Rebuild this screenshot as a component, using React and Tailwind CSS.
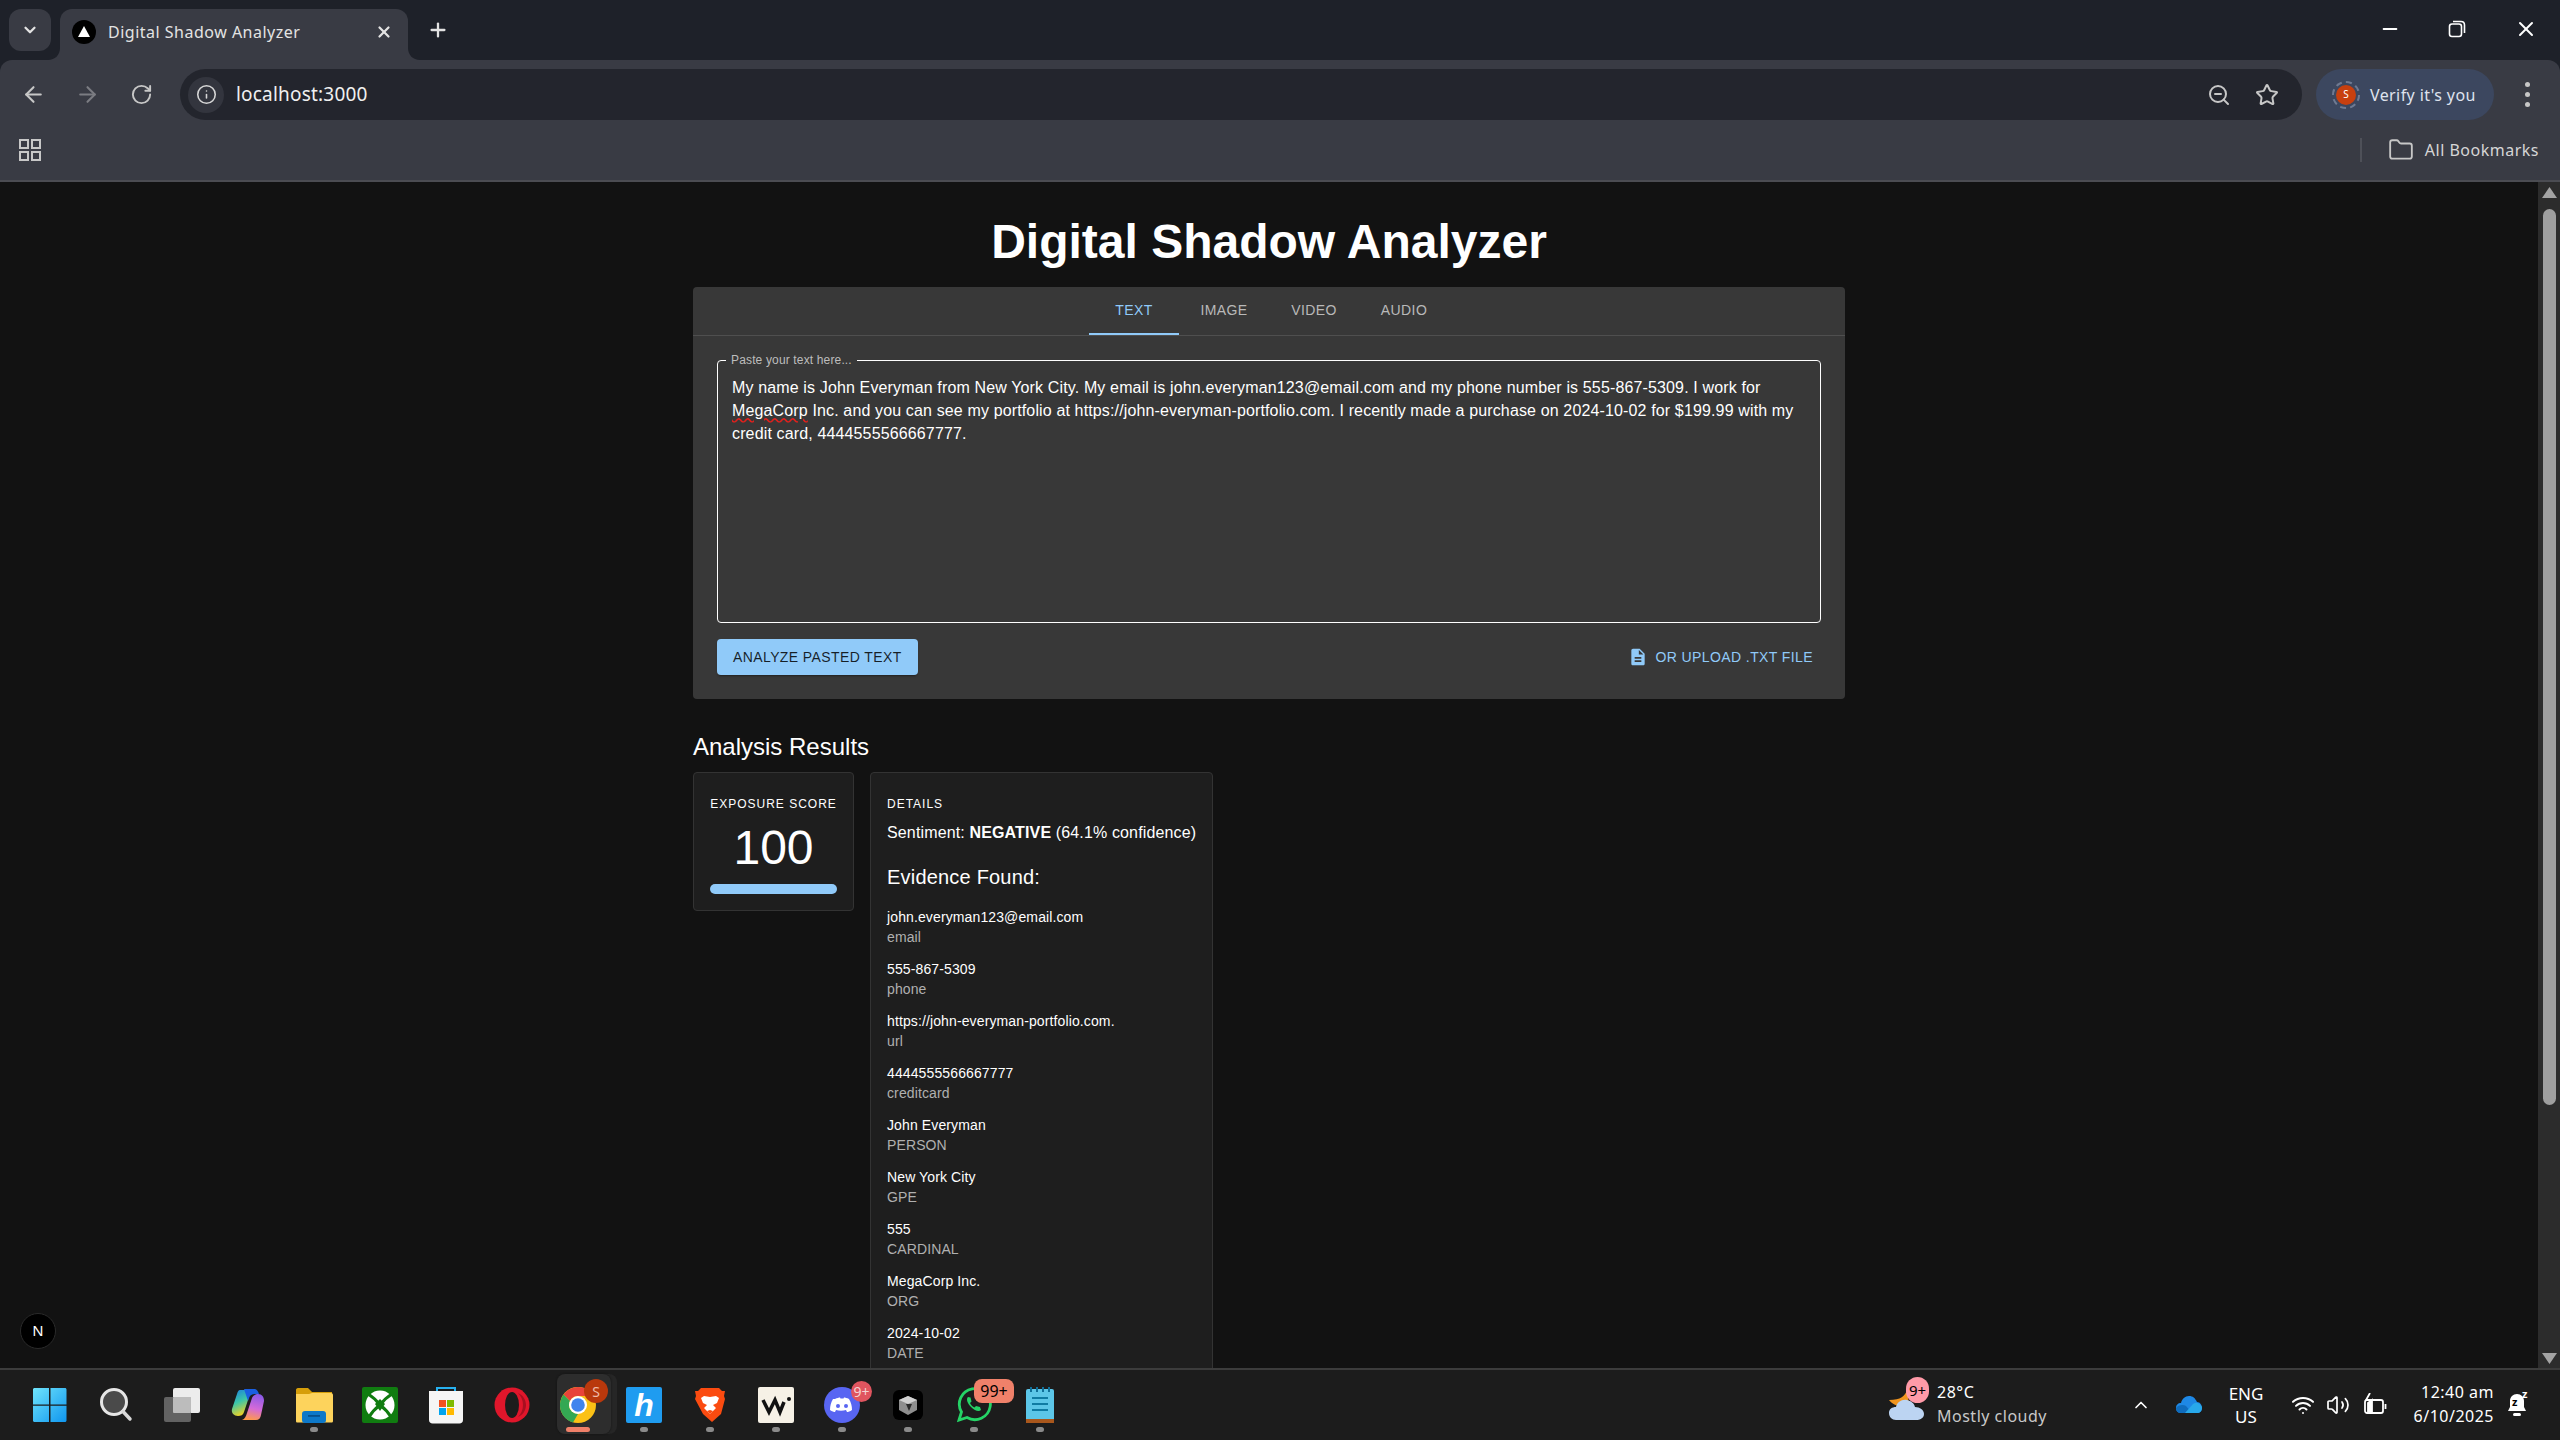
import { ArrowLeft, ArrowRight, RotateCw, Info, ZoomOut, Star, Folder, X, Plus, ChevronDown, ChevronUp, Minus, Volume2, Wifi } from "lucide-react";

const sans = "font-['Liberation_Sans',Arial,sans-serif]";
const ui = "font-['Noto_Sans',sans-serif]";

const evidence = [
  ["john.everyman123@email.com", "email"],
  ["555-867-5309", "phone"],
  ["https://john-everyman-portfolio.com.", "url"],
  ["4444555566667777", "creditcard"],
  ["John Everyman", "PERSON"],
  ["New York City", "GPE"],
  ["555", "CARDINAL"],
  ["MegaCorp Inc.", "ORG"],
  ["2024-10-02", "DATE"],
];

function WindowsIcon() {
  return (
    <svg width="36" height="36" viewBox="0 0 36 36">
      <defs>
        <linearGradient id="win" x1="0" y1="0" x2="1" y2="1">
          <stop offset="0" stopColor="#6fe4fb" />
          <stop offset="1" stopColor="#0f96ef" />
        </linearGradient>
      </defs>
      <path fill="url(#win)" d="M1 2.5C1 1.7 1.7 1 2.5 1H17v16.500H1zM18.500 1H33c.8 0 1.500.7 1.500 1.500V17.500H18.500zM1 18.800H17V35H2.500C1.700 35 1 34.300 1 33.500zM18.500 18.800h16V33.500c0 .8-.7 1.500-1.500 1.500H18.500z" />
    </svg>
  );
}

function SearchIcon() {
  return (
    <svg width="36" height="36" viewBox="0 0 36 36">
      <circle cx="16" cy="15" r="12.500" fill="#4a4a4a" stroke="#e6e6e6" strokeWidth="3" />
      <path d="M25 24.500L32 32" stroke="#d8d8d8" strokeWidth="3.500" strokeLinecap="round" />
    </svg>
  );
}

function TaskViewIcon() {
  return (
    <svg width="38" height="36" viewBox="0 0 38 36">
      <rect x="10" y="1" width="27" height="25" rx="2" fill="#ececec" />
      <rect x="1" y="10" width="27" height="25" rx="2" fill="#6a6a6a" fillOpacity="0.9" />
      <rect x="10" y="10" width="18" height="16" rx="1" fill="#bcbcbc" />
    </svg>
  );
}

function CopilotIcon() {
  return (
    <svg width="36" height="36" viewBox="0 0 36 36">
      <defs>
        <linearGradient id="cp1" x1="0" y1="0" x2="0.4" y2="1">
          <stop offset="0" stopColor="#1a7de0" />
          <stop offset="0.5" stopColor="#3cc6a8" />
          <stop offset="1" stopColor="#f4d21f" />
        </linearGradient>
        <linearGradient id="cp2" x1="0.6" y1="0" x2="0.4" y2="1">
          <stop offset="0" stopColor="#8a5ae8" />
          <stop offset="0.55" stopColor="#d46ad8" />
          <stop offset="1" stopColor="#ff9a4a" />
        </linearGradient>
      </defs>
      <path fill="url(#cp1)" d="M10 3h14c-3 1-4 4-5 7l-5 15c-1 3-3 4-6 4-4 0-7-3-6-7L7 7c.5-2 1.500-4 3-4z" />
      <path fill="url(#cp2)" d="M26 33H12c3-1 4-4 5-7l5-15c1-2 3-4 6-4 4 0 6 3 6 7l-3 14c-.5 3-2 5-5 5z" />
      <path fill="#1a5fe0" d="M14 2h10c3 0 4 2 5 5h-4c-3 0-5 1-6 4l-1 3z" />
    </svg>
  );
}

function ExplorerIcon() {
  return (
    <svg width="38" height="36" viewBox="0 0 38 36">
      <path fill="#d69e0a" d="M1 3c0-1 .7-2 2-2h10l4 4h20v6H1z" />
      <path fill="#fdd35c" d="M1 7h13l3-1h19c1 0 2 .7 2 2v26c0 1-.7 1.500-1.500 1.500H2.500C1.500 35.500 1 35 1 34z" />
      <rect x="7" y="24" width="24" height="12" rx="3" fill="#0d78c9" />
      <rect x="13" y="28" width="12" height="1.800" fill="#07508c" />
    </svg>
  );
}

function XboxIcon() {
  return (
    <svg width="36" height="36" viewBox="0 0 36 36">
      <rect width="36" height="36" rx="2" fill="#107c10" />
      <circle cx="18" cy="18" r="14.500" fill="#fff" />
      <path d="M6 7C11 10 15 14 18 18C21 14 25 10 30 7" fill="none" stroke="#107c10" strokeWidth="3" />
      <path d="M7 30C10 25 14 21 18 18C22 21 26 25 29 30" fill="none" stroke="#107c10" strokeWidth="3" />
      <path d="M13 17L18 12L23 17L18 24z" fill="#107c10" />
    </svg>
  );
}

function StoreIcon() {
  return (
    <svg width="36" height="38" viewBox="0 0 36 38">
      <path d="M9 6V2h18v4" fill="none" stroke="#27b1f0" strokeWidth="2" />
      <path d="M1 5h34v29c0 2-1.500 3.500-3.500 3.500h-27C2.500 37.500 1 36 1 34z" fill="#f5f5f5" />
      <rect x="11" y="14" width="7" height="7" fill="#f25022" />
      <rect x="19" y="14" width="7" height="7" fill="#7fba00" />
      <rect x="11" y="22" width="7" height="7" fill="#00a4ef" />
      <rect x="19" y="22" width="7" height="7" fill="#ffb900" />
    </svg>
  );
}

function OperaIcon() {
  return (
    <svg width="36" height="36" viewBox="0 0 36 36">
      <ellipse cx="18" cy="18" rx="17.500" ry="17.500" fill="#e0162b" />
      <ellipse cx="18" cy="18" rx="7" ry="13" fill="#1c1c1c" />
      <path d="M24 6c5 2 8 7 8 12s-3 10-8 12c3-3 5-7 5-12S27 9 24 6z" fill="#a70f20" />
    </svg>
  );
}

function ChromeIcon() {
  return (
    <svg width="36" height="36" viewBox="0 0 36 36">
      <circle cx="18" cy="18" r="18" fill="#fbc116" />
      <path d="M18 0a18 18 0 0 1 15.600 9H18a9 9 0 0 0-8 5L3.500 7.500A18 18 0 0 1 18 0z" fill="#e8443a" />
      <path d="M3.500 7.500L10 14a9 9 0 0 0 8 13l-5 8.500A18 18 0 0 1 3.500 7.500z" fill="#34a853" />
      <circle cx="18" cy="18" r="9" fill="#fff" />
      <circle cx="18" cy="18" r="6.800" fill="#3f84ee" />
    </svg>
  );
}

function BraveIcon() {
  return (
    <svg width="32" height="36" viewBox="0 0 32 36">
      <path d="M7 1h18l3 3 3 0-1 5 1 3-4 15-9 8-9-8L1 12l1-3-1-5 3 0z" fill="#fb4b10" />
      <path d="M16 10c-2 0-4-1-6-1l-3 2 2 5 4 2-3 3 6 6 6-6-3-3 4-2 2-5-3-2c-2 0-4 1-6 1z" fill="#fff" />
      <path d="M16 23l-3 1 3 3 3-3z" fill="#fb4b10" />
    </svg>
  );
}

function WIcon() {
  return (
    <svg width="36" height="36" viewBox="0 0 36 36">
      <rect width="36" height="36" rx="2" fill="#f6f1e6" />
      <path d="M5 13l6 12 6-12 5 12 4-10" fill="none" stroke="#111" strokeWidth="3.500" />
      <circle cx="31" cy="12" r="2" fill="#111" />
    </svg>
  );
}

function DiscordIcon() {
  return (
    <svg width="36" height="36" viewBox="0 0 36 36">
      <circle cx="18" cy="18" r="18" fill="#5865f2" />
      <path d="M11 12c2-1 4-1.500 5-1.500l.5 1h3l.5-1c1 0 3 .5 5 1.500 2 3 3 7 3 11-2 1.500-4 2-5 2l-1-2c-3 1-7 1-10 0l-1 2c-1 0-3-.5-5-2 0-4 1-8 3-11z" fill="#fff" />
      <circle cx="14" cy="19" r="2" fill="#5865f2" />
      <circle cx="22" cy="19" r="2" fill="#5865f2" />
    </svg>
  );
}

function CubeIcon() {
  return (
    <svg width="30" height="30" viewBox="0 0 30 30">
      <rect width="30" height="30" rx="6" fill="#000" />
      <path d="M15 6l9 4v10l-9 5-9-5V10z" fill="#8e8e8e" />
      <path d="M15 6l9 4-9 4-9-4z" fill="#d0d0d0" />
      <path d="M13 14h6l-3 7z" fill="#2a2a2a" />
    </svg>
  );
}

function WhatsAppIcon() {
  return (
    <svg width="36" height="36" viewBox="0 0 36 36">
      <path d="M3 33l2.500-8A15.500 15.500 0 1 1 11 30.500z" fill="none" stroke="#25d366" strokeWidth="2.800" />
      <path d="M12 10c-2 2-1 6 3 10s8 5 10 3l-1-3-4-1-1.500 1.500c-2-1-3.500-2.500-4.500-4.500l1.500-1.500-1-4z" fill="#25d366" />
    </svg>
  );
}

function NotepadIcon() {
  return (
    <svg width="30" height="38" viewBox="0 0 30 38">
      <rect x="1" y="3" width="28" height="34" rx="2" fill="#5cc6e8" />
      <rect x="1" y="33" width="28" height="4" fill="#a9571c" />
      <path d="M6 1v5M12 1v5M18 1v5M24 1v5" stroke="#0f6f99" strokeWidth="2" />
      <path d="M7 12h16M7 18h16M7 24h16" stroke="#0f7ba3" strokeWidth="2" />
    </svg>
  );
}

function Task({ children, dot, active }) {
  return (
    <div className="relative flex h-full w-[66px] items-center justify-center">
      {children}
      {dot && <span className={`absolute bottom-[8px] left-1/2 h-[5px] -translate-x-1/2 rounded-full ${active ? "w-[24px] bg-[#ef8069]" : "w-[8px] bg-[#8a8a8a]"}`} />}
    </div>
  );
}

function Taskbar() {
  return (
    <div className={`flex h-[72px] shrink-0 items-center border-t-2 border-[#3c3c3c] bg-[#1c1c1c] pl-[17px] text-white ${ui}`}>
      <Task><WindowsIcon /></Task>
      <Task><SearchIcon /></Task>
      <Task><TaskViewIcon /></Task>
      <Task><CopilotIcon /></Task>
      <Task dot><ExplorerIcon /></Task>
      <Task><XboxIcon /></Task>
      <Task><StoreIcon /></Task>
      <Task><OperaIcon /></Task>
      <Task dot active>
        <div className="absolute top-[4px] left-[12px] h-[60px] w-[60px] rounded-lg bg-[#262626]" />
        <div className="absolute top-[4px] left-[12px] h-[60px] w-[54px] rounded-lg bg-[#2d2d2d] shadow-[0_0_2px_#111]" />
        <div className="relative"><ChromeIcon /></div>
        <span className="absolute top-[9px] right-[3px] flex h-[24px] w-[24px] items-center justify-center rounded-full bg-[#b9380c] text-[14px] text-[#eebbaa]">S</span>
      </Task>
      <Task dot>
        <div className={`flex h-[36px] w-[36px] items-center justify-center rounded-[2px] bg-[#1f9cf0] text-[32px] font-bold text-white italic ${sans}`}>h</div>
      </Task>
      <Task dot><BraveIcon /></Task>
      <Task dot><WIcon /></Task>
      <Task dot>
        <DiscordIcon />
        <span className="absolute top-[11px] right-[3px] flex h-[21px] w-[21px] items-center justify-center rounded-full bg-[#e0555f] text-[14px] leading-none text-[#f4d4d4]">9+</span>
      </Task>
      <Task dot><CubeIcon /></Task>
      <Task dot>
        <WhatsAppIcon />
        <span className="absolute top-[9px] right-[-7px] flex h-[24px] w-[40px] items-center justify-center rounded-lg bg-[#f0816a] text-[16px] leading-none text-black">99+</span>
      </Task>
      <Task dot><NotepadIcon /></Task>

      <div className="ml-auto flex items-center pr-[31px]">
        <div className="relative h-[42px] w-[36px]">
          <svg width="36" height="42" viewBox="0 0 36 42">
            <path d="M18 6c-2 6-6 10-18 10 4 6 14 8 20 4z" fill="#f0951f" />
            <path d="M7 36c-4 0-7-3-7-7s3-6 7-6c1-5 6-8 11-7 4 1 7 3 8 7 5 0 9 3 9 7s-4 6-8 6z" fill="#bcd4f2" />
          </svg>
          <span className="absolute top-[-7px] left-[17px] flex h-[26px] w-[23px] items-center justify-center rounded-full bg-[#ff9aa8] text-[15px] leading-none text-black">9+</span>
        </div>
        <div className="mb-[2px] ml-[12px] flex w-[112px] flex-col text-[16px] leading-[24px] tracking-[0.5px]">
          <span>28°C</span>
          <span className="whitespace-nowrap text-[#c8c8c8]">Mostly cloudy</span>
        </div>
        <ChevronUp className="ml-[82px] h-[22px] w-[20px]" strokeWidth={2} />
        <svg className="ml-[25px]" width="26" height="18" viewBox="0 0 26 18">
          <path d="M5 17c-3 0-5-2-5-5s2-5 5-5c1-4 4-7 8-7s6 2 8 6c3 0 5 3 5 6s-2 5-5 5z" fill="#1e88e5" />
          <path d="M5 17c-3 0-5-2-5-5 2-3 7-4 10-2l6 7z" fill="#0f6cbd" />
          <path d="M9 17l8-9c3-2 6-2 9 3 0 4-2 6-5 6z" fill="#28a8ea" />
        </svg>
        <div className="ml-[24px] flex w-[40px] flex-col items-center text-[17px] leading-[23px]">
          <span>ENG</span>
          <span>US</span>
        </div>
        <Wifi className="ml-[25px] h-[24px] w-[24px]" strokeWidth={2} />
        <Volume2 className="ml-[11px] h-[24px] w-[24px]" strokeWidth={1.700} />
        <svg className="ml-[13px]" width="24" height="24" viewBox="0 0 24 24" fill="none" stroke="#fff" strokeWidth="1.800">
          <rect x="2" y="7" width="18" height="13" rx="2" />
          <path d="M22.500 11v5" />
          <path d="M5 18V10l4-3v11z" fill="#fff" />
          <path d="M7 0L3 7h5l-2 5" />
        </svg>
        <div className="mb-[2px] ml-[17px] flex w-[90px] flex-col items-end text-[16px] leading-[24px] tracking-[0.5px] whitespace-nowrap">
          <span>12:40 am</span>
          <span>6/10/2025</span>
        </div>
        <div className="relative ml-[13px] h-[26px] w-[22px]">
          <svg width="20" height="26" viewBox="0 0 20 26">
            <path d="M10 2c4 0 7 3 7 7v6l2 4H1l2-4V9c0-4 3-7 7-7z" fill="#fff" />
            <rect x="6" y="21" width="8" height="3" rx="1.500" fill="#fff" />
          </svg>
          <span className="absolute top-[4px] left-[5px] text-[11px] leading-none font-bold text-black">z</span>
          <span className="absolute top-[-4px] left-[15px] text-[11px] leading-none font-bold text-white">z</span>
        </div>
      </div>
    </div>
  );
}

function BrowserChrome() {
  return (
    <div className={`shrink-0 bg-[#1e2129] text-[#e3e3e3] ${ui}`}>
      <div className="flex h-[60px] items-end">
        <div className="mb-[9px] ml-[9px] flex h-[42px] w-[42px] items-center justify-center rounded-xl bg-[#393b44]">
          <ChevronDown className="h-[18px] w-[18px]" strokeWidth={3} />
        </div>
        <div className="relative ml-[9px] flex h-[51px] w-[348px] items-center rounded-t-xl bg-[#393b44] pr-[15px] pb-[6px] pl-[12px]">
          <svg className="absolute bottom-0 left-[-12px]" width="12" height="12" viewBox="0 0 12 12"><path d="M12 0v12H0c7 0 12-5 12-12z" fill="#393b44" /></svg>
          <svg className="absolute right-[-12px] bottom-0" width="12" height="12" viewBox="0 0 12 12"><path d="M0 0v12h12C5 12 0 7 0 0z" fill="#393b44" /></svg>
          <div className="flex h-[24px] w-[24px] items-center justify-center rounded-full bg-black">
            <svg width="12" height="11" viewBox="0 0 12 11"><path d="M6 0l6 11H0z" fill="#fff" /></svg>
          </div>
          <span className="ml-[12px] text-[16px] tracking-[0.5px] whitespace-nowrap">Digital Shadow Analyzer</span>
          <X className="ml-auto h-[18px] w-[18px]" strokeWidth={3} />
        </div>
        <Plus className="mb-[19px] ml-[19px] h-[22px] w-[22px]" strokeWidth={2.500} />
        <div className="mb-[19px] ml-auto flex items-center text-white">
          <Minus className="h-[22px] w-[22px]" strokeWidth={2} />
          <svg className="ml-[47px]" width="18" height="18" viewBox="0 0 18 18" fill="none" stroke="#fff" strokeWidth="1.600">
            <rect x="1.500" y="4" width="12" height="12.500" rx="2.500" />
            <path d="M5 1.500h8c2 0 3.500 1.500 3.500 3.500v8" />
          </svg>
          <X className="mr-[22px] ml-[48px] h-[24px] w-[24px]" strokeWidth={2} />
        </div>
      </div>

      <div className="rounded-t-xl bg-[#393b44]">
        <div className="flex h-[60px] items-start pt-[9px]">
          <ArrowLeft className="mt-[13px] ml-[21px] h-[25px] w-[25px] text-[#c7c7c7]" strokeWidth={2} />
          <ArrowRight className="mt-[13px] ml-[29px] h-[25px] w-[25px] text-[#7b7c82]" strokeWidth={2} />
          <RotateCw className="mt-[14px] ml-[30px] h-[23px] w-[23px] text-[#c7c7c7]" strokeWidth={2} />
          <div className="ml-[27px] flex h-[51px] w-[2122px] items-center rounded-full bg-[#23252d] pr-[23px] pl-[8px]">
            <div className="flex h-[36px] w-[36px] items-center justify-center rounded-full bg-[#33353e]">
              <Info className="h-[21px] w-[21px] text-[#d6d6d6]" strokeWidth={1.800} />
            </div>
            <span className="ml-[12px] text-[19px] tracking-[0.2px] text-[#f0f0f0]">localhost:3000</span>
            <ZoomOut className="ml-auto h-[24px] w-[24px] text-[#c7c7c7]" strokeWidth={2} />
            <Star className="ml-[24px] h-[24px] w-[24px] text-[#c7c7c7]" strokeWidth={2} />
          </div>
          <div className="ml-[14px] flex h-[51px] w-[178px] items-center rounded-full bg-[#3c475f] pl-[16px]">
            <div className="flex h-[28px] w-[28px] items-center justify-center rounded-full border-2 border-dashed border-[#6f7a92]">
              <span className="flex h-[20px] w-[20px] items-center justify-center rounded-full bg-[#c8400f] text-[10px] text-white">S</span>
            </div>
            <span className="ml-[10px] text-[16px] tracking-[0.4px] whitespace-nowrap text-[#dfe3ee]">Verify it's you</span>
          </div>
          <div className="ml-[31px] flex h-[51px] flex-col items-center justify-center gap-[5px]">
            <span className="h-[5px] w-[5px] rounded-full bg-[#c7c7c7]" />
            <span className="h-[5px] w-[5px] rounded-full bg-[#c7c7c7]" />
            <span className="h-[5px] w-[5px] rounded-full bg-[#c7c7c7]" />
          </div>
        </div>
        <div className="flex h-[62px] items-center border-b-2 border-[#4b4c52]">
          <svg className="ml-[19px]" width="22" height="22" viewBox="0 0 22 22" fill="none" stroke="#c7c7c7" strokeWidth="2">
            <rect x="1" y="1" width="8" height="8" />
            <rect x="13" y="1" width="8" height="8" />
            <rect x="1" y="13" width="8" height="8" />
            <rect x="13" y="13" width="8" height="8" />
          </svg>
          <div className="ml-auto h-[24px] w-[2px] bg-[#4e5058]" />
          <Folder className="ml-[26px] h-[26px] w-[26px] text-[#c7c7c7]" strokeWidth={1.700} />
          <span className="mr-[21px] ml-[11px] text-[16px] tracking-[0.5px] text-[#d6d6d6]">All Bookmarks</span>
        </div>
      </div>
    </div>
  );
}

function Scrollbar() {
  return (
    <div className="flex w-[22px] shrink-0 flex-col items-center bg-[#2c2c2c]">
      <svg className="mt-[5px]" width="15" height="11" viewBox="0 0 15 11"><path d="M7.500 0L15 11H0z" fill="#a3a3a3" /></svg>
      <div className="mt-[11px] h-[896px] w-[13px] rounded-full bg-[#9f9f9f]" />
      <svg className="mt-auto mb-[4px]" width="15" height="11" viewBox="0 0 15 11"><path d="M7.500 11L15 0H0z" fill="#a3a3a3" /></svg>
    </div>
  );
}

function Tab({ label, active }) {
  return (
    <div className={`flex h-[48px] w-[90px] items-center justify-center border-b-2 text-[14px] tracking-[0.4px] uppercase ${active ? "border-[#90caf9] text-[#90caf9]" : "border-transparent text-[#b9b9b9]"}`}>
      {label}
    </div>
  );
}

function Analyzer() {
  return (
    <div className={`flex-1 overflow-hidden px-[24px] text-white ${sans}`}>
      <div className="mx-auto w-[1152px]">
        <h1 className="mt-[32px] mb-[17px] text-center text-[48px] leading-[56px] font-bold">Digital Shadow Analyzer</h1>

        <div className="rounded bg-[#383838]">
          <div className="flex justify-center border-b border-[#4f4f4f]">
            <Tab label="Text" active />
            <Tab label="Image" />
            <Tab label="Video" />
            <Tab label="Audio" />
          </div>
          <div className="p-[24px]">
            <div className="relative h-[263px] rounded border border-white px-[14px] pt-[15px] pb-[16px] text-[16px] leading-[23px] tracking-[0.14px]">
              <span className="absolute top-[-9px] left-[8px] bg-[#383838] px-[5px] text-[12px] leading-[17px] tracking-[0.15px] text-[#bdbdbd]">Paste your text here...</span>
              My name is John Everyman from New York City. My email is john.everyman123@email.com and my phone number is 555-867-5309. I work for{" "}
              <span className="underline decoration-[#e0201c] decoration-wavy">MegaCorp</span> Inc. and you can see my portfolio at https://john-everyman-portfolio.com. I recently made a purchase on 2024-10-02 for $199.99 with my credit card, 4444555566667777.
            </div>
            <div className="mt-[16px] flex items-center justify-between">
              <button className="h-[36px] rounded bg-[#90caf9] px-[16px] text-[14px] tracking-[0.4px] text-black/85 uppercase shadow-[0_3px_1px_-2px_rgba(0,0,0,0.2),0_2px_2px_0_rgba(0,0,0,0.14)]">
                Analyze pasted text
              </button>
              <div className="flex h-[36px] items-center pr-[8px] text-[14px] tracking-[0.4px] text-[#90caf9] uppercase">
                <svg className="mr-[8px]" width="20" height="20" viewBox="0 0 24 24" fill="#90caf9">
                  <path d="M14 2H6c-1.100 0-1.990.9-1.990 2L4 20c0 1.100.89 2 1.990 2H18c1.100 0 2-.9 2-2V8l-6-6zm2 16H8v-2h8v2zm0-4H8v-2h8v2zm-3-5V3.500L18.500 9H13z" />
                </svg>
                Or upload .txt file
              </div>
            </div>
          </div>
        </div>

        <h2 className="mt-[32px] mb-[9px] text-[24px] leading-[32px]">Analysis Results</h2>
        <div className="flex items-start gap-[16px]">
          <div className="w-[161px] rounded border border-[#333] bg-[#1e1e1e] p-[16px]">
            <div className="-mt-[1px] mb-[1px] text-center text-[12px] leading-[32px] tracking-[1px] whitespace-nowrap uppercase">Exposure Score</div>
            <div className="-mt-[1px] mb-[1px] text-center text-[48px] leading-[56px]">100</div>
            <div className="mt-[8px] h-[10px] rounded-[5px] bg-[#90caf9]" />
          </div>
          <div className="w-[343px] rounded border border-[#333] bg-[#1e1e1e] p-[16px]">
            <div className="-mt-[1px] mb-[1px] text-[12px] leading-[32px] tracking-[1px] uppercase">Details</div>
            <p className="text-[16px] leading-[24px] tracking-[0.14px] whitespace-nowrap">
              Sentiment: <strong>NEGATIVE</strong> (64.1% confidence)
            </p>
            <h3 className="mt-[16px] text-[20px] leading-[32px] tracking-[0.2px]">Evidence Found:</h3>
            <ul className="py-[8px]">
              {evidence.map(([value, label]) => (
                <li key={value} className="py-[6px] text-[14px] leading-[20px] tracking-[0.12px]">
                  <div>{value}</div>
                  <div className="text-[#b0b0b0]">{label}</div>
                </li>
              ))}
            </ul>
          </div>
        </div>
      </div>
    </div>
  );
}

function App() {
  return (
    <div className="flex h-[1440px] w-[2560px] flex-col overflow-hidden bg-[#121212]">
      <BrowserChrome />
      <div className="relative flex min-h-0 flex-1">
        <Analyzer />
        <Scrollbar />
        <div className={`absolute bottom-[19px] left-[20px] flex h-[36px] w-[36px] items-center justify-center rounded-full border border-[#2a2a2a] bg-black text-[15px] text-white ${sans}`}>N</div>
      </div>
      <Taskbar />
    </div>
  );
}

export default App;
